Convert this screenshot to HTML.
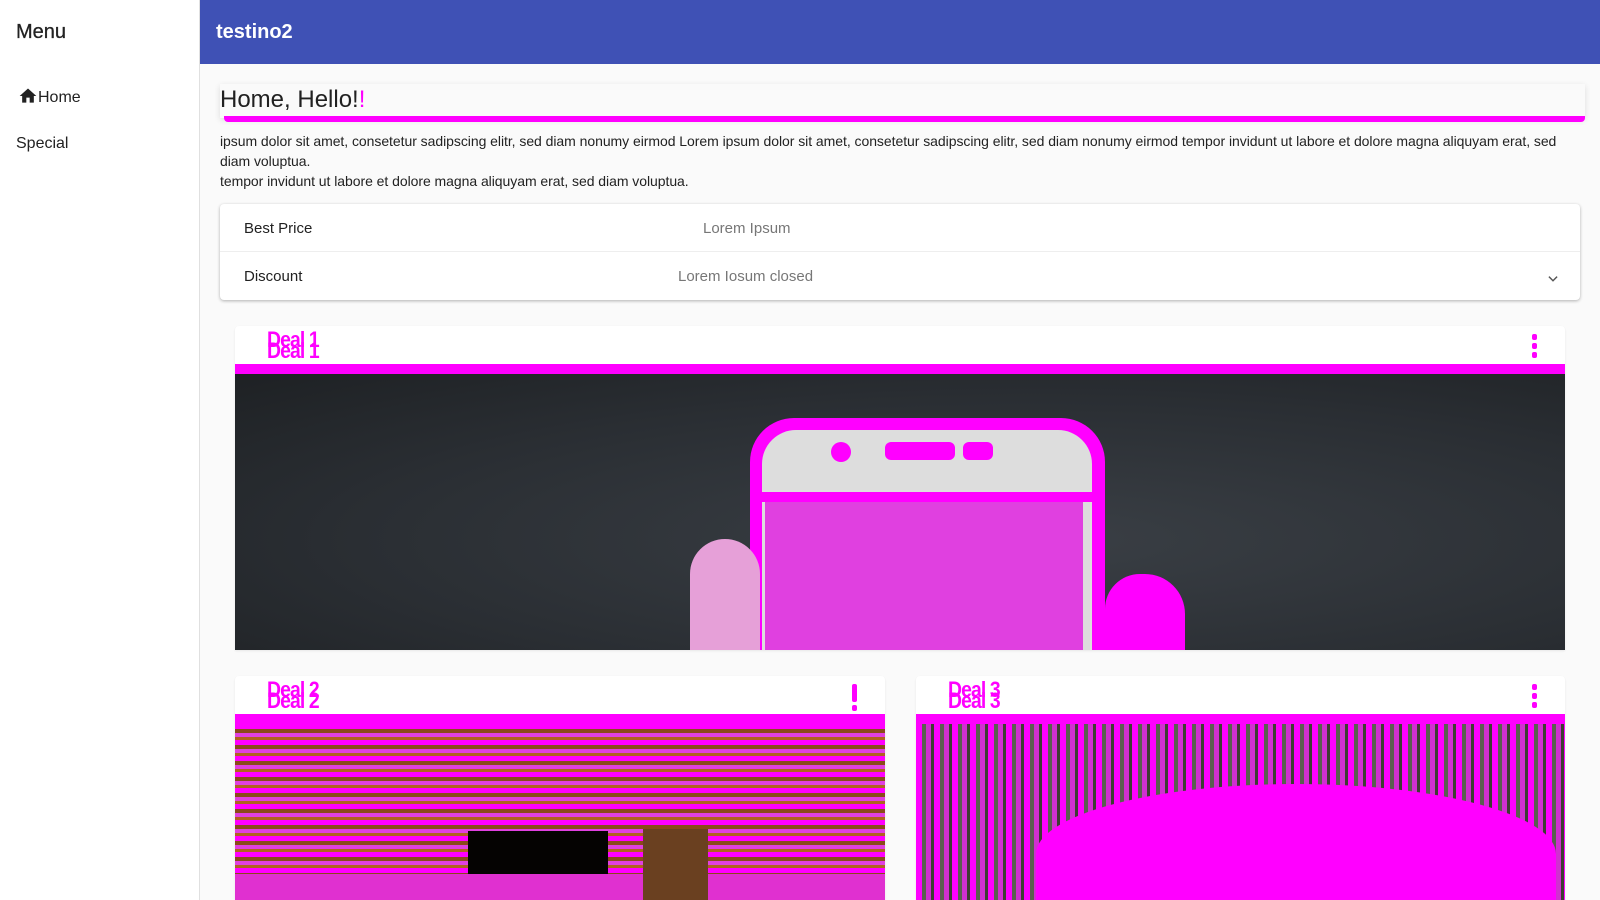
<!DOCTYPE html>
<html><head><meta charset="utf-8"><style>
*{box-sizing:border-box;margin:0;padding:0}
html,body{width:1600px;height:900px;overflow:hidden}
body{background:#fafafa;font-family:"Liberation Sans",sans-serif;color:#212121;position:relative}
.side{position:absolute;left:0;top:0;width:200px;height:900px;background:#fff;border-right:1px solid #e0e0e0}
.side .menu{position:absolute;left:16px;top:21px;font-size:20px;color:#222;-webkit-text-stroke:.3px #222}
.side .it{position:absolute;left:16px;font-size:16px;color:#222}
.top{position:absolute;left:200px;top:0;width:1400px;height:64px;background:#3f51b5;color:#fff;font-size:20px;font-weight:bold;padding:21px 0 0 16px}
.title{position:absolute;left:220px;top:84px;width:1365px;height:34px;background:#fafafa;box-shadow:0 2px 6px rgba(0,0,0,.12);font-size:24px;padding:2px 0 0 0}
.title .bar{position:absolute;left:4px;right:0;top:32px;height:6px;background:#f0f;border-radius:0 0 4px 4px}
.p{position:absolute;left:220px;top:131px;width:1352px;font-size:14px;line-height:20px;color:#222;letter-spacing:-.05px}
.panel{position:absolute;left:220px;top:204px;width:1360px;height:96px;background:#fff;box-shadow:0 1px 3px rgba(0,0,0,.3);border-radius:4px;font-size:15px}
.row{position:absolute;left:0;width:100%;height:48px}
.row span{position:absolute;top:16px}
.card{position:absolute;background:#fff;border-radius:4px 4px 0 0;overflow:hidden;box-shadow:0 1px 2px rgba(0,0,0,.08)}
.hd{height:38px;position:relative}
.dt{position:absolute;left:32px;top:8px;color:#f0f;font-weight:bold;font-family:"Liberation Sans Narrow","Liberation Sans",sans-serif;font-size:22px;line-height:11px;letter-spacing:-1px;transform:scaleX(.88);transform-origin:left}
.kb{position:absolute;top:8px;width:5px;height:24px}
.kb i{display:block;width:5px;height:6px;background:#f0f;margin-bottom:3px;border-radius:2px}
.mg{height:10px;background:#f0f}
</style></head><body>
<div class="side">
<div class="menu">Menu</div>
<div class="it" style="top:86px;left:18px"><svg width="20" height="20" viewBox="0 0 24 24" style="vertical-align:-4px"><path d="M10 20v-6h4v6h5v-8h3L12 3 2 12h3v8z" fill="#222"/></svg>Home</div>
<div class="it" style="top:135px">Special</div>
</div>
<div class="top">testino2</div>
<div class="title">Home, Hello!<span style="color:#f0f">!</span><div class="bar"></div></div>
<div class="p">ipsum dolor sit amet, consetetur sadipscing elitr, sed diam nonumy eirmod Lorem ipsum dolor sit amet, consetetur sadipscing elitr, sed diam nonumy eirmod tempor invidunt ut labore et dolore magna aliquyam erat, sed diam voluptua.<br>tempor invidunt ut labore et dolore magna aliquyam erat, sed diam voluptua.</div>
<div class="panel">
<div class="row" style="top:0;border-bottom:1px solid #eee"><span style="left:24px">Best Price</span><span style="left:483px;color:#777">Lorem Ipsum</span></div>
<div class="row" style="top:48px"><span style="left:24px">Discount</span><span style="left:458px;color:#777">Lorem Iosum closed</span>
<svg style="position:absolute;right:20px;top:20px" width="14" height="14" viewBox="0 0 24 24"><path d="M5 8l7 7 7-7" stroke="#555" stroke-width="2.5" fill="none"/></svg></div>
</div>

<div class="card" style="left:235px;top:326px;width:1330px;height:324px">
<div class="hd"><div class="dt">Deal 1<br>Deal 1</div><div class="kb" style="left:1297px"><i></i><i></i><i></i></div></div>
<div class="mg"></div>
<div style="position:relative;height:276px;background:radial-gradient(ellipse at 60% 60%,#3a3f45,#2a2e33 60%,#1e2124)">
<div style="position:absolute;left:515px;top:44px;width:355px;height:240px;background:#f0f;border-radius:44px 44px 0 0"></div>
<div style="position:absolute;left:527px;top:56px;width:330px;height:240px;background:#ddd;border-radius:34px 34px 0 0"></div>
<div style="position:absolute;left:527px;top:118px;width:330px;height:10px;background:#f0f"></div>
<div style="position:absolute;left:530px;top:128px;width:318px;height:160px;background:#e040e0"></div>
<div style="position:absolute;left:455px;top:165px;width:70px;height:120px;background:#e6a0d8;border-radius:35px 35px 0 0"></div>
<div style="position:absolute;left:870px;top:200px;width:80px;height:90px;background:#f0f;border-radius:35px 40px 0 0"></div>
<div style="position:absolute;left:596px;top:68px;width:20px;height:20px;background:#f0f;border-radius:50%"></div>
<div style="position:absolute;left:650px;top:68px;width:70px;height:18px;background:#f0f;border-radius:6px"></div>
<div style="position:absolute;left:728px;top:68px;width:30px;height:18px;background:#f0f;border-radius:6px"></div>
</div></div>

<div class="card" style="left:235px;top:676px;width:650px;height:224px">
<div class="hd"><div class="dt">Deal 2<br>Deal 2</div><div class="kb" style="left:617px"><i style="height:18px"></i><i></i></div></div>
<div class="mg"></div>
<div style="position:relative;height:200px;background:repeating-linear-gradient(180deg,#f0f 0 5px,#8a4a1a 5px 9px,#e040e0 9px 13px,#b0621f 13px 16px)">
<div style="position:absolute;left:233px;top:107px;width:140px;height:60px;background:#050302"></div>
<div style="position:absolute;left:0;top:150px;width:650px;height:60px;background:#e030d0"></div>
<div style="position:absolute;left:408px;top:105px;width:65px;height:80px;background:#6a4020"></div>
</div></div>

<div class="card" style="left:916px;top:676px;width:649px;height:224px">
<div class="hd"><div class="dt">Deal 3<br>Deal 3</div><div class="kb" style="left:616px"><i></i><i></i><i></i></div></div>
<div class="mg"></div>
<div style="position:relative;height:200px;background:repeating-linear-gradient(90deg,#f0f 0 6px,#5a5f50 6px 10px,#d030d0 10px 15px,#3e3d33 15px 18px)">
<div style="position:absolute;left:120px;top:60px;width:520px;height:140px;background:#f0f;border-radius:50% 50% 0 0"></div>
</div></div>
</body></html>
